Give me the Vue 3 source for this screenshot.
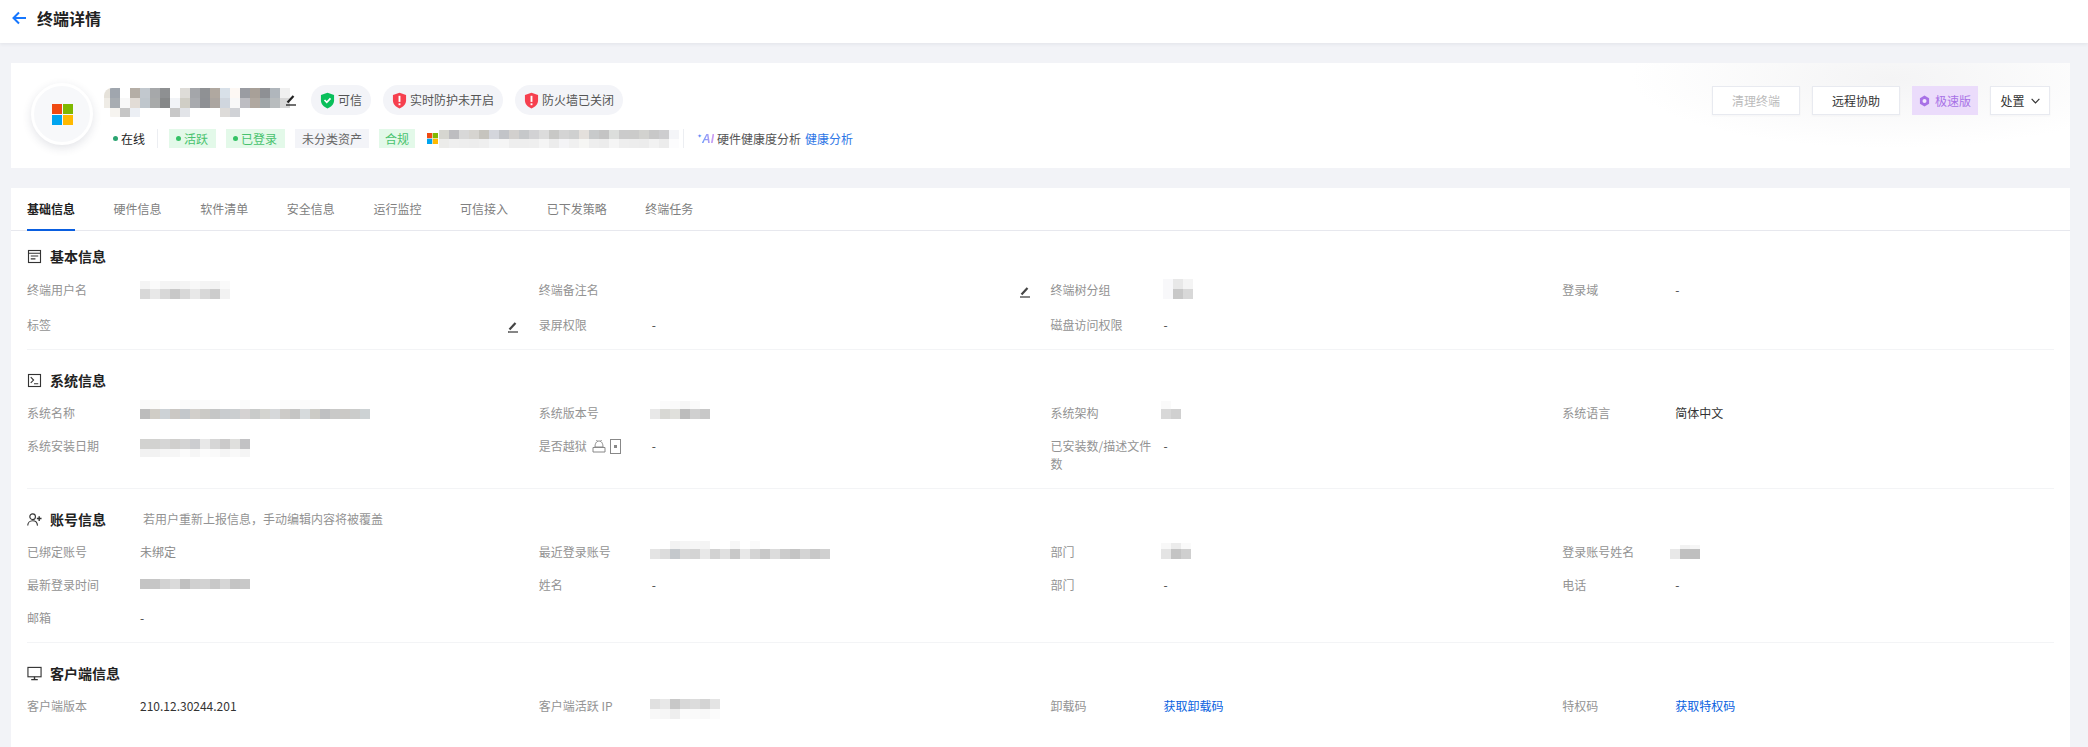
<script setup>
const parse = (rows) =>
  rows.map(([h, s]) => ({ h, cells: s.split(' ').map((c) => '#' + c) }))

const nameMosaic = parse([
  [10, 'e6e2da a0a6ae fff b5aea6 c2c8ce a6a8aa 8e9092 fff dedcd8 a4a6aa 8f9194 b0a8a0 d8e0e8 fdf8f4 9a9ca2 a8a098 8e9094 b0b6bc f0f0f0'],
  [10, 'efece6 a8adb2 f8f8f8 e2dcd6 bfc6cc a8aaaa 868889 f2f4f7 d0cec6 a8aaae 8e9094 aba5a0 d0d6de f8f8f8 bdbdc2 b0a8a0 a0a5a8 b8bcbe d8d8d8'],
  [9, 'fff f6f4f0 c6c6c6 eceff4 fff fff fff c8c8c8 e2e4e8 fff fff fff dddbd9 d0d2d6 fff fff fff fff fff'],
])
const deviceMosaic = parse([
  [9, 'd6d6d0 bdbdc0 d8d8d8 d6d4d0 c6c4be d4d6dc c2c4c8 d2d0ce c6c8ca d2d2d4 dcdcdc c8c8c6 d4d4d4 cfd0d0 e4e0dc c8cacb c4c4c4 dcdedc cbcbcb cbcbca d2d2cf c8c8c8 cdcdcf f4f5f8'],
  [9, 'ececea efefef eeeeee ededed efefef f4f5f6 f5f5f5 eeeeee eeeeee efefef f5f5f5 ececec f4f4f6 f0f0f0 f6f6f4 eeeeee ececec f5f5f5 eeeeee ededed ececec f2f2f2 ececec fcfcfd'],
])

const m = (rows, top, left = 0) => ({ rows: parse(rows), top, left })

const sections = [
  {
    title: '基本信息',
    icon: 'doc',
    cls: 'first',
    fields: [
      { label: '终端用户名', mosaic: m([[8, 'f4f4f4 fbfbfb f4f4f4 f2f2f2 f4f4f4 f8f8f8 f4f4f4 f2f2f2 fafafa'], [10, 'd8d8d8 e8e8e8 d8d8d8 c8c8c8 d8d8d8 e8e8e8 d8d8d8 cccccc f2f2f2']], 0) },
      { label: '终端备注名', edit: true },
      { label: '终端树分组', mosaic: m([[10, 'f8f8fa e8e8e8 f4f4f4'], [10, 'f8f8fa c8c8c8 d8d8d8']], -2, -1) },
      { label: '登录域', value: '-' },
      { label: '标签', edit: true },
      { label: '录屏权限', value: '-' },
      { label: '磁盘访问权限', value: '-' },
    ],
  },
  {
    title: '系统信息',
    icon: 'term',
    fields: [
      { label: '系统名称', mosaic: m([[9, 'fafafa fbfbf8 fff fff fbfbfb fafafa fbfbfb fcfcfc fff fff fbfbfb fff fff fff fcfcfc fcfcfc fbfbfb fbfbfb fff fff fff fff fff'], [10, 'bcbcbc d0cdc6 cdd2d6 cbc8c4 c3c7cb d2cfcb cbcac6 c5c6c6 c9cccf cbced0 d5d2d2 c9cbca d4d4d0 d6d8da cdcbc8 c5c5c4 d6dadc cccbc6 bfc0c2 c9c9c8 cbc9c6 cbcccb cdd2d4']], -4) },
      { label: '系统版本号', mosaic: m([[8, 'fff fbfbfb fafafa f6f6f6 fafafa fff'], [10, 'e8e8e8 d8d8d4 e0e0dc bcbcbc d0d0d0 c8c8c8']], -3, -2) },
      { label: '系统架构', mosaic: m([[8, 'fafafa fff'], [10, 'd8d8d8 d0d0d0']], -3, -3) },
      { label: '系统语言', value: '简体中文', strong: true },
      { label: '系统安装日期', mosaic: m([[10, 'd2d2d0 d2d2d0 d6d6d6 d0cfcd d4d4d4 cccdd0 e8e8e8 d6d6d6 cbcaca dfdfdd c2c2c4'], [8, 'f2f2f2 f2f2f2 f6f6f6 f6f6f6 fbfbfb f6f6f6 fcfcfc fafafa f5f5f5 f9f9f9 f5f5f5']], 2) },
      { label: '是否越狱', jail: true, value: '-' },
      { label: '已安装数/描述文件数', value: '-' },
    ],
  },
  {
    title: '账号信息',
    icon: 'user',
    hint: '若用户重新上报信息，手动编辑内容将被覆盖',
    fields: [
      { label: '已绑定账号', value: '未绑定', muted: true },
      { label: '最近登录账号', mosaic: m([[8, 'fff fff f2f2f2 f5f5f5 f6f6f6 f4f4f4 fff fff f7f7f7 fff fafafa fff fff fff fff fff fff fff'], [10, 'e4e4e4 dcdcdc c4c8cc d8d8d8 d4d4d4 e8e8e8 d2d2d2 e0e0e0 c8c8c8 e8e8e8 d4d4d4 c8c8c8 dcdcdc cccccc c4c4c4 d4d4d4 c8c8c8 d0d0d0']], -2, -2) },
      { label: '部门', mosaic: m([[6, 'f8f8f8 ececec fafafa'], [10, 'e4e4e4 c4c4c4 cfcfcf']], 0, -3) },
      { label: '登录账号姓名', mosaic: m([[4, 'fff f2f2f2 f6f6f6'], [10, 'e8e8e8 c0c0c0 bfbfbf']], 2, -5) },
      { label: '最新登录时间', mosaic: m([[10, 'c4c4c4 c6c6c6 d2d2d2 dadada c0c0c0 d0d0d0 d2d2d2 c8c8c8 d6d6d6 c4c4c4 c8c8c8']], 3) },
      { label: '姓名', value: '-' },
      { label: '部门', value: '-' },
      { label: '电话', value: '-' },
      { label: '邮箱', value: '-' },
    ],
  },
  {
    title: '客户端信息',
    icon: 'monitor',
    fields: [
      { label: '客户端版本', value: '210.12.30244.201', strong: true },
      { label: '客户端活跃 IP', mosaic: m([[10, 'e0e0e0 e8e8e8 c8c8c8 d8d8d8 dcdcdc d4d4d4 e4e4e4'], [10, 'f8f8f8 f6f6f6 eeeeee fbfbfb fafafa f8f8f8 fcfcfc']], 2, -2) },
      { label: '卸载码', link: '获取卸载码' },
      { label: '特权码', link: '获取特权码' },
    ],
  },
]

const tabs = ['基础信息', '硬件信息', '软件清单', '安全信息', '运行监控', '可信接入', '已下发策略', '终端任务']
</script>

<template>
  <div class="page">
    <header class="topbar">
      <svg class="back" viewBox="0 0 14 14" width="14" height="14" fill="none" stroke="#1677ff" stroke-width="2">
        <path d="M14 7H2M7 1.500L1.500 7 7 12.500" />
      </svg>
      <h1>终端详情</h1>
    </header>

    <section class="hero">
      <div class="avatar">
        <svg viewBox="0 0 21 21" width="21" height="21">
          <rect width="10" height="10" fill="#f04a12" />
          <rect x="11" width="10" height="10" fill="#7fb800" />
          <rect y="11" width="10" height="10" fill="#00a4ef" />
          <rect x="11" y="11" width="10" height="10" fill="#ffb900" />
        </svg>
      </div>

      <div class="hero-main">
        <div class="name-row">
          <div class="mosaic name-mosaic">
            <div v-for="(r, i) in nameMosaic" :key="i" class="mrow">
              <span v-for="(c, j) in r.cells" :key="j" class="cell" :style="{ background: c, height: r.h + 'px' }"></span>
            </div>
          </div>
          <svg class="pen name-pen" viewBox="0 0 12 12" width="12" height="12" fill="none" stroke="#222">
            <path d="M2.500 8.500L8.500 2" stroke-width="2.200" />
            <path d="M1 11h10" stroke-width="1.300" />
          </svg>
          <span class="pill first-pill">
            <svg viewBox="0 0 16 18" width="15" height="17">
              <path d="M8 .8L15 3v6c0 4-3 6.800-7 8.400C4 15.800 1 13 1 9V3z" fill="#0abf5b" />
              <path d="M4.800 8.500l2.400 2.500 4-4.300" fill="none" stroke="#fff" stroke-width="1.800" />
            </svg>
            可信
          </span>
          <span class="pill">
            <svg viewBox="0 0 16 18" width="15" height="17">
              <path d="M8 .8L15 3v6c0 4-3 6.800-7 8.400C4 15.800 1 13 1 9V3z" fill="#f6404f" />
              <rect x="7" y="4" width="2" height="6.500" fill="#fff" />
              <rect x="7" y="12" width="2" height="2" fill="#fff" />
            </svg>
            实时防护未开启
          </span>
          <span class="pill">
            <svg viewBox="0 0 16 18" width="15" height="17">
              <path d="M8 .8L15 3v6c0 4-3 6.800-7 8.400C4 15.800 1 13 1 9V3z" fill="#f6404f" />
              <rect x="7" y="4" width="2" height="6.500" fill="#fff" />
              <rect x="7" y="12" width="2" height="2" fill="#fff" />
            </svg>
            防火墙已关闭
          </span>
        </div>

        <div class="meta-row">
          <span class="online"><i class="dot"></i>在线</span>
          <i class="vline online-line"></i>
          <span class="tag green"><i class="dot"></i>活跃</span>
          <span class="tag green"><i class="dot"></i>已登录</span>
          <span class="tag gray">未分类资产</span>
          <span class="tag green compact">合规</span>
          <svg class="ms-small" viewBox="0 0 21 21" width="11" height="11">
            <rect width="10" height="10" fill="#f04a12" />
            <rect x="11" width="10" height="10" fill="#7fb800" />
            <rect y="11" width="10" height="10" fill="#00a4ef" />
            <rect x="11" y="11" width="10" height="10" fill="#ffb900" />
          </svg>
          <div class="mosaic device-mosaic">
            <div v-for="(r, i) in deviceMosaic" :key="i" class="mrow">
              <span v-for="(c, j) in r.cells" :key="j" class="cell" :style="{ background: c, height: r.h + 'px' }"></span>
            </div>
          </div>
          <i class="vline device-line"></i>
          <span class="ai"><b>✦</b><em>AI</em></span>
          <span class="health">硬件健康度分析</span>
          <a class="link health-link">健康分析</a>
        </div>
      </div>

      <div class="actions">
        <button class="btn disabled">清理终端</button>
        <button class="btn">远程协助</button>
        <button class="btn speed">
          <svg viewBox="0 0 12 13" width="11" height="12">
            <path d="M6 .5l5 3v6l-5 3-5-3v-6z" fill="#a872e6" />
            <circle cx="6" cy="6.500" r="2.200" fill="#f3e9fe" />
          </svg>
          极速版
        </button>
        <button class="btn deal">
          处置
          <svg viewBox="0 0 10 6" width="9" height="6" fill="none" stroke="#333" stroke-width="1.300">
            <path d="M.7.7L5 5l4.300-4.300" />
          </svg>
        </button>
      </div>
    </section>

    <section class="detail">
      <nav class="tabs">
        <span v-for="(t, i) in tabs" :key="t" class="tab" :class="{ active: i === 0 }">{{ t }}</span>
      </nav>

      <div class="body">
        <div v-for="s in sections" :key="s.title" class="block" :class="s.cls">
          <div class="block-title">
            <svg viewBox="0 0 16 16" width="15" height="15" fill="none" stroke="#333" stroke-width="1.200">
              <template v-if="s.icon === 'doc'">
                <rect x="1.600" y="1.600" width="12.800" height="12.800" />
                <path d="M1.600 4.500h12.800M4 7.500h8M4 10.500h5" />
              </template>
              <template v-else-if="s.icon === 'term'">
                <rect x="1.600" y="1.600" width="12.800" height="12.800" />
                <path d="M4 4.500l3 3-3 3M7.500 11.500h4.500" />
              </template>
              <template v-else-if="s.icon === 'user'">
                <circle cx="6" cy="5" r="3" />
                <path d="M.8 14.500c0-3 2.300-5.200 5.200-5.200s5 2.200 5.200 5.200" />
                <path d="M13 4.500v5M10.500 7h5" stroke-width="1.500" />
              </template>
              <template v-else>
                <rect x="1" y="1.500" width="14" height="10" />
                <path d="M8 11.500v3M4.500 14.500h7" stroke-width="1.500" />
              </template>
            </svg>
            <h2>{{ s.title }}</h2>
            <span v-if="s.hint" class="hint">{{ s.hint }}</span>
          </div>

          <div class="grid">
            <div v-for="(f, k) in s.fields" :key="k" class="field">
              <span class="label" :class="{ nowrap: f.jail }">
                {{ f.label }}
                <template v-if="f.jail">
                  <svg class="jail" viewBox="0 0 14 14" width="14" height="14" fill="none" stroke="#888">
                    <path d="M3 8c0-3.500 1.500-6 4-6s4 2.500 4 6zM1 8.500h12v4.500H1zM4.500 1l1 1.500M9.500 1l-1 1.500" />
                  </svg>
                  <svg class="jail phone" viewBox="0 0 11 15" width="11" height="15" fill="none" stroke="#888">
                    <rect x=".5" y=".5" width="10" height="14" />
                    <rect x="4" y="6" width="3" height="3" fill="#888" stroke="none" />
                  </svg>
                </template>
              </span>
              <span class="value" :class="{ strong: f.strong, muted: f.muted, grow: f.edit }">
                <template v-if="f.value">{{ f.value }}</template>
                <a v-if="f.link" class="link">{{ f.link }}</a>
                <div
                  v-if="f.mosaic"
                  class="mosaic"
                  :style="{ marginTop: f.mosaic.top + 'px', marginLeft: f.mosaic.left + 'px' }"
                >
                  <div v-for="(r, i) in f.mosaic.rows" :key="i" class="mrow">
                    <span v-for="(c, j) in r.cells" :key="j" class="cell" :style="{ background: c, height: r.h + 'px' }"></span>
                  </div>
                </div>
              </span>
              <svg v-if="f.edit" class="pen" viewBox="0 0 12 12" width="12" height="12" fill="none" stroke="#444">
                <path d="M2.500 8.500L8.500 2" stroke-width="2.200" />
                <path d="M1 11h10" stroke-width="1.300" />
              </svg>
            </div>
          </div>
        </div>
      </div>
    </section>
  </div>
</template>

<style scoped>
.page {
  height: 747px;
  overflow: hidden;
  background: #f2f3f7;
  font-family: "Noto Sans CJK SC", "Noto Sans", sans-serif;
  font-size: 12px;
  line-height: 18px;
  color: #333;
}
.topbar {
  height: 43px;
  display: flex;
  align-items: center;
  padding: 0 0 7px 12px;
  box-sizing: border-box;
  background: #fff;
  box-shadow: 0 1px 4px rgba(30, 40, 70, 0.08);
}
.back {
  margin-right: 11px;
}
.topbar h1 {
  margin: 0;
  font-size: 16px;
  line-height: 22px;
  font-weight: 600;
  color: #222;
}
.hero {
  margin: 20px 18px 0 11px;
  height: 105px;
  box-sizing: border-box;
  padding: 20px 20px 0 20px;
  display: flex;
  align-items: flex-start;
  background:
    radial-gradient(ellipse 260px 70px at 1880px 15px, #f4f4f5 0%, rgba(255, 255, 255, 0) 100%),
    #fff;
}
.avatar {
  width: 62px;
  height: 62px;
  box-sizing: border-box;
  border: 3px solid #fff;
  border-radius: 50%;
  background: #f7f8fa;
  box-shadow: 0 3px 10px rgba(40, 50, 80, 0.13);
  display: flex;
  align-items: center;
  justify-content: center;
  flex: none;
}
.hero-main {
  margin-left: 7px;
  padding-top: 2px;
  flex: 1;
  min-width: 0;
}
.name-row {
  display: flex;
  align-items: center;
  height: 30px;
}
.name-mosaic {
  margin-top: 5px;
  clip-path: inset(0 0 0 4px round 8px 0 0 8px);
}
.name-pen {
  margin: 0 0 0 -5px;
  position: relative;
}
.pill {
  display: inline-flex;
  align-items: center;
  gap: 3px;
  height: 30px;
  padding: 0 9px;
  margin-left: 12px;
  border-radius: 15px;
  background: #f3f4f8;
  color: #555;
  white-space: nowrap;
}
.first-pill {
  margin-left: 14px;
}
.meta-row {
  display: flex;
  align-items: center;
  height: 19px;
  margin-top: 14px;
  padding-left: 13px;
  white-space: nowrap;
}
.online {
  display: inline-flex;
  align-items: center;
  color: #222;
}
.dot {
  width: 5px;
  height: 5px;
  border-radius: 50%;
  background: #2ba471;
  margin-right: 3px;
  flex: none;
}
.green .dot {
  background: #35c266;
}
.vline {
  width: 1px;
  height: 19px;
  background: #eceef2;
  flex: none;
}
.online-line {
  margin: 0 11px 0 12px;
}
.tag {
  display: inline-flex;
  align-items: center;
  height: 19px;
  padding: 0 8px 0 7px;
  margin-right: 10px;
}
.tag.green {
  background: #e3f9e9;
  color: #48c26e;
}
.tag.gray {
  background: #f3f4f8;
  color: #666;
  padding: 0 7px;
}
.tag.compact {
  padding: 0 6px;
  margin-right: 12px;
}
.ms-small {
  flex: none;
  margin-right: 1px;
}
.device-line {
  margin: 0 13px 0 4px;
}
.ai {
  display: inline-flex;
  align-items: flex-start;
  width: 17px;
  margin-right: 3px;
  height: 14px;
  line-height: 14px;
}
.ai b {
  font-size: 6px;
  line-height: 8px;
  color: #5b8cf5;
  font-weight: 400;
}
.ai em {
  font-family: "Liberation Sans", sans-serif;
  font-size: 12px;
  font-weight: 700;
  background: linear-gradient(90deg, #6c9bfa, #d39cf2);
  -webkit-background-clip: text;
  background-clip: text;
  color: transparent;
}
.health {
  color: #555;
}
.link {
  color: #0a5fe0;
  cursor: pointer;
}
.health-link {
  margin-left: 4px;
  color: #2f77e6;
}
.actions {
  display: flex;
  gap: 12px;
  margin-top: 3px;
  flex: none;
}
.btn {
  height: 29px;
  box-sizing: border-box;
  border: 1px solid #e8eaf0;
  background: #fff;
  font: inherit;
  color: #333;
  padding: 0;
  width: 88px;
  box-shadow: 0 1px 2px rgba(40, 50, 80, 0.04);
}
.btn.disabled {
  color: #bbb;
}
.btn.speed {
  width: 66px;
  border: 0;
  box-shadow: none;
  background: #ebdcfb;
  color: #a872e6;
  display: inline-flex;
  align-items: center;
  justify-content: center;
  gap: 5px;
}
.btn.deal {
  width: 60px;
  display: inline-flex;
  align-items: center;
  justify-content: center;
  gap: 6px;
}
.detail {
  margin: 20px 18px 0 11px;
  min-height: 559px;
  background: #fff;
}
.tabs {
  display: flex;
  gap: 38.6px;
  height: 43px;
  box-sizing: border-box;
  padding: 12px 16px 0;
  border-bottom: 1px solid #e7e8ee;
}
.tab {
  height: 31px;
  color: #808080;
  white-space: nowrap;
}
.tab.active {
  color: #222;
  font-weight: 600;
  border-bottom: 2px solid #0a5fe0;
  box-sizing: border-box;
}
.body {
  padding: 0 16px;
}
.block {
  padding: 19px 0 15px;
  border-bottom: 1px solid #f3f4f6;
}
.block.first {
  padding: 14px 0 14px;
}
.block.first .field {
  height: 20px;
}
.block:last-child {
  border-bottom: 0;
}
.block-title {
  display: flex;
  align-items: center;
  height: 22px;
  margin-bottom: 13px;
}
.block-title svg {
  flex: none;
  margin-right: 8px;
}
.block-title h2 {
  margin: 0;
  font-size: 14px;
  line-height: 22px;
  font-weight: 600;
  color: #222;
}
.hint {
  margin-left: 37px;
  color: #939393;
}
.grid {
  display: grid;
  grid-template-columns: repeat(4, 1fr);
  column-gap: 20px;
  row-gap: 15px;
}
.field {
  display: flex;
  align-items: flex-start;
  min-width: 0;
}
.block.first .label,
.block.first .value {
  margin-top: 1px;
}
.label {
  width: 101px;
  margin-right: 12px;
  flex: none;
  color: #939393;
}
.label.nowrap {
  display: inline-flex;
  align-items: center;
  white-space: nowrap;
}
.jail {
  flex: none;
  margin-left: 5px;
}
.jail.phone {
  margin-left: 4px;
}
.value {
  display: block;
  height: 18px;
  color: #444;
}
.value.grow {
  flex: 1;
}
.value.strong {
  color: #333;
}
.value.muted {
  color: #8a8a8a;
}
.mosaic {
  display: flex;
  flex-direction: column;
  width: max-content;
}
.mrow {
  display: flex;
}
.cell {
  display: block;
  width: 10px;
  flex: none;
}
.pen {
  flex: none;
  margin-top: 6px;
}
.name-pen {
  margin-top: 0;
}
</style>

<style>
html,
body {
  margin: 0;
  background: #f2f3f7;
}
</style>
